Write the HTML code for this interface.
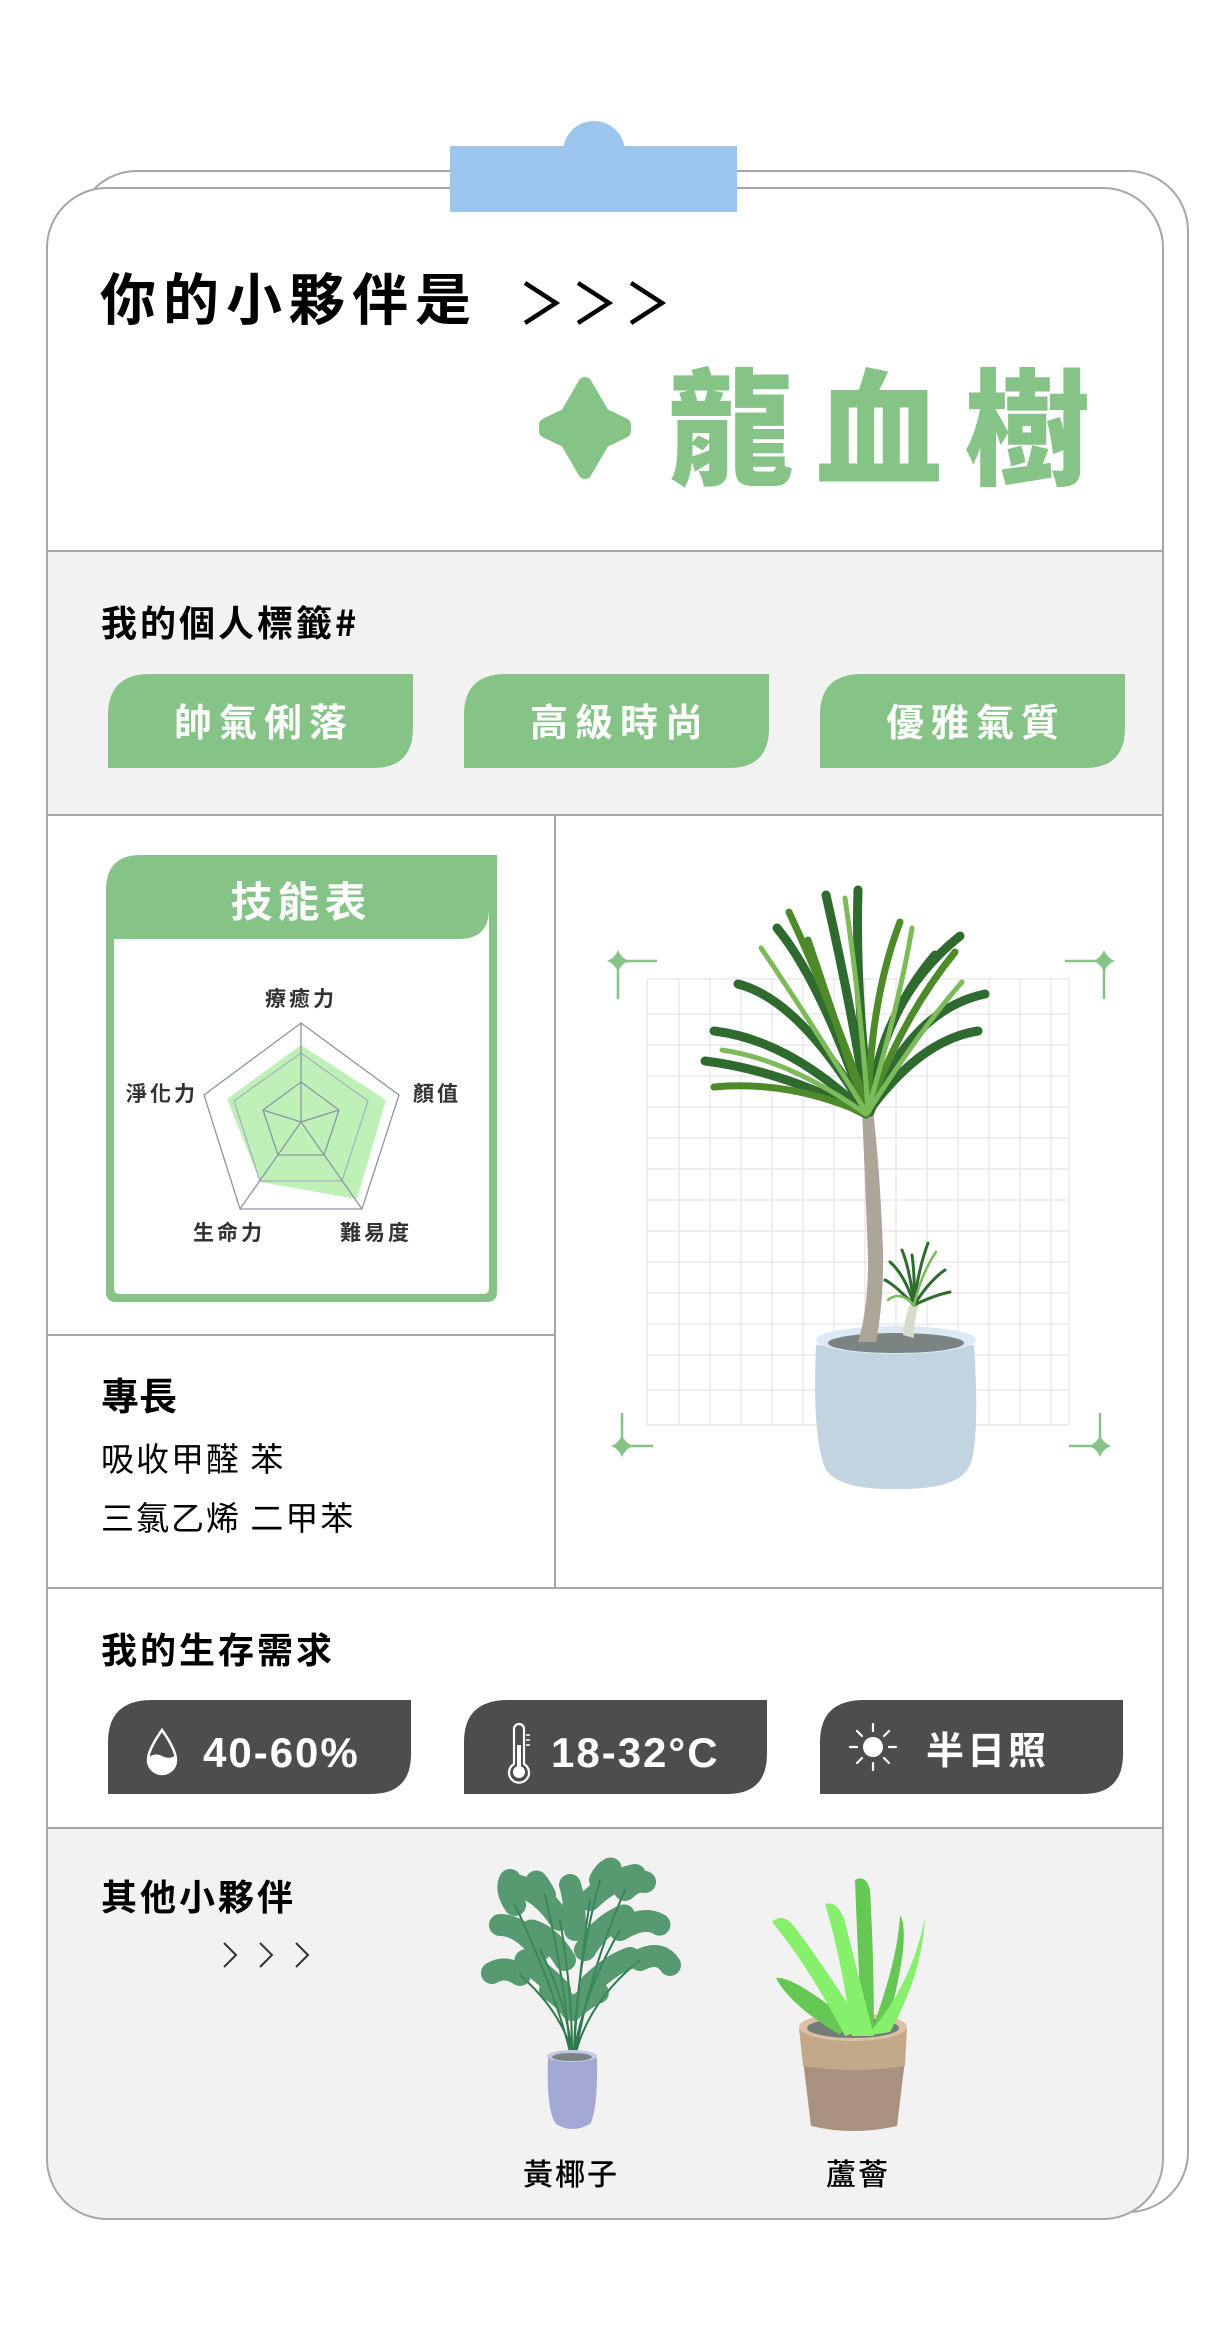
<!DOCTYPE html>
<html><head><meta charset="utf-8"><style>
html,body{margin:0;padding:0;background:#fff;}
svg{display:block;}
text{font-family:"Liberation Sans","Noto Sans CJK TC",sans-serif;}
.cjk{font-family:"Noto Sans CJK TC","Liberation Sans",sans-serif;}
</style></head><body>
<svg width="1227" height="2330" viewBox="0 0 1227 2330" xmlns="http://www.w3.org/2000/svg">
<defs>
<clipPath id="card"><rect x="47" y="188" width="1116" height="2031" rx="60"/></clipPath>
</defs>
<rect x="77" y="171" width="1111" height="2041" rx="60" fill="#fff" stroke="#a6a6a6" stroke-width="2"/>
<rect x="47" y="188" width="1116" height="2031" rx="60" fill="#fff"/>
<g clip-path="url(#card)">
<rect x="40" y="551" width="1130" height="264" fill="#f2f2f2"/>
<rect x="40" y="1828" width="1130" height="400" fill="#f2f2f2"/>
</g>
<rect x="47" y="188" width="1116" height="2031" rx="60" fill="none" stroke="#a6a6a6" stroke-width="2"/>
<g stroke="#a6a6a6" stroke-width="2">
<line x1="47" y1="551" x2="1163" y2="551"/>
<line x1="47" y1="815" x2="1163" y2="815"/>
<line x1="47" y1="1335" x2="555" y2="1335"/>
<line x1="555" y1="815" x2="555" y2="1588"/>
<line x1="47" y1="1588" x2="1163" y2="1588"/>
<line x1="47" y1="1828" x2="1163" y2="1828"/>
</g>
<circle cx="594" cy="152" r="31" fill="#9bc5ec"/>
<rect x="450" y="146" width="287" height="66" fill="#9bc5ec"/>

<text x="100" y="320" class="cjk" font-size="56" font-weight="700" letter-spacing="7" fill="#000">你的小夥伴是</text>
<g fill="none" stroke="#000" stroke-width="4.5" stroke-linejoin="miter">
<path d="M525 283 L556 303 L525 323"/><path d="M578 283 L609 303 L578 323"/><path d="M631 283 L662 303 L631 323"/>
</g>
<polygon points="585,384 603,415 624,425 624,431 603,441 585,472 567,441 546,431 546,425 567,415" fill="#86c386" stroke="#86c386" stroke-width="14" stroke-linejoin="round"/>
<text x="668" y="475" class="cjk" font-size="126" font-weight="900" letter-spacing="22" fill="#86c386">龍血樹</text>

<text x="101" y="636" class="cjk" font-size="36" font-weight="700" letter-spacing="3" fill="#000">我的個人標籤#</text>
<g fill="#86c386">
<path d="M108 768 L108 715 Q108 674 150 674 L413 674 L413 728 Q413 768 373 768Z"/>
<path d="M464 768 L464 715 Q464 674 506 674 L769 674 L769 728 Q769 768 729 768Z"/>
<path d="M820 768 L820 715 Q820 674 862 674 L1125 674 L1125 728 Q1125 768 1085 768Z"/>
</g>
<g class="cjk" font-size="38" font-weight="700" fill="#fff" letter-spacing="7" text-anchor="middle">
<text x="264" y="736">帥氣俐落</text>
<text x="620" y="736">高級時尚</text>
<text x="976" y="736">優雅氣質</text>
</g>

<path d="M106 1292 L106 890 Q106 855 141 855 L497 855 L497 1292 Q497 1302 487 1302 L116 1302 Q106 1302 106 1292Z" fill="#86c386"/>
<path d="M114 939 L459 939 Q489 939 489 909 L489 1288 Q489 1294 483 1294 L120 1294 Q114 1294 114 1288Z" fill="#fff"/>
<text x="301" y="917" class="cjk" font-size="42" font-weight="700" fill="#fff" letter-spacing="5" text-anchor="middle">技能表</text>
<polygon points="301,1045 386,1100 357,1199 260,1182 227,1099" fill="#bff0b8"/>
<g fill="none" stroke="#8a97a3" stroke-width="1.3">
<polygon points="301,1023 399,1095 362,1209 240,1209 204,1095"/>
<polygon points="301,1053 368,1101 342,1181 260,1181 234,1101" stroke="#a8b2bb"/>
<polygon points="301,1082 339,1110 324,1155 278,1155 263,1110"/>
<line x1="301" y1="1122" x2="301" y2="1023"/>
<line x1="301" y1="1122" x2="362" y2="1209"/>
<line x1="301" y1="1122" x2="240" y2="1209"/>
<line x1="301" y1="1122" x2="339" y2="1110"/>
<line x1="301" y1="1122" x2="263" y2="1110"/>
</g>
<g class="cjk" font-size="21" font-weight="700" fill="#333" letter-spacing="3">
<text x="265" y="1006">療癒力</text>
<text x="126" y="1101">淨化力</text>
<text x="413" y="1101">顏值</text>
<text x="193" y="1240">生命力</text>
<text x="340" y="1240">難易度</text>
</g>

<text x="101" y="1410" class="cjk" font-size="38" font-weight="700" fill="#000">專長</text>
<text x="101" y="1471" class="cjk" font-size="33" fill="#000" letter-spacing="2">吸收甲醛 苯</text>
<text x="101" y="1530" class="cjk" font-size="33" fill="#000" letter-spacing="2">三氯乙烯 二甲苯</text>

<g stroke="#e4e4e4" stroke-width="1.2">
<rect x="647" y="979" width="422" height="446" fill="none"/>
<line x1="679" y1="979" x2="679" y2="1425"/><line x1="710" y1="979" x2="710" y2="1425"/><line x1="741" y1="979" x2="741" y2="1425"/><line x1="772" y1="979" x2="772" y2="1425"/><line x1="803" y1="979" x2="803" y2="1425"/><line x1="834" y1="979" x2="834" y2="1425"/><line x1="865" y1="979" x2="865" y2="1425"/><line x1="896" y1="979" x2="896" y2="1425"/><line x1="927" y1="979" x2="927" y2="1425"/><line x1="958" y1="979" x2="958" y2="1425"/><line x1="989" y1="979" x2="989" y2="1425"/><line x1="1020" y1="979" x2="1020" y2="1425"/><line x1="1051" y1="979" x2="1051" y2="1425"/>
<line x1="647" y1="1014" x2="1069" y2="1014"/><line x1="647" y1="1045" x2="1069" y2="1045"/><line x1="647" y1="1076" x2="1069" y2="1076"/><line x1="647" y1="1107" x2="1069" y2="1107"/><line x1="647" y1="1138" x2="1069" y2="1138"/><line x1="647" y1="1169" x2="1069" y2="1169"/><line x1="647" y1="1200" x2="1069" y2="1200"/><line x1="647" y1="1231" x2="1069" y2="1231"/><line x1="647" y1="1262" x2="1069" y2="1262"/><line x1="647" y1="1293" x2="1069" y2="1293"/><line x1="647" y1="1324" x2="1069" y2="1324"/><line x1="647" y1="1355" x2="1069" y2="1355"/><line x1="647" y1="1390" x2="1069" y2="1390"/>
</g>
<g stroke="#86c386" stroke-width="2.5" fill="none">
<path d="M618 961 H657 M618 961 V999"/>
<path d="M1104 961 H1065 M1104 961 V999"/>
<path d="M622 1446 H653 M622 1446 V1413"/>
<path d="M1100 1446 H1069 M1100 1446 V1413"/>
</g>
<g fill="#86c386">
<path d="M618 950 Q621 958 629 961 Q621 964 618 972 Q615 964 607 961 Q615 958 618 950Z"/>
<path d="M1104 950 Q1107 958 1115 961 Q1107 964 1104 972 Q1101 964 1093 961 Q1101 958 1104 950Z"/>
<path d="M622 1435 Q625 1443 633 1446 Q625 1449 622 1457 Q619 1449 611 1446 Q619 1443 622 1435Z"/>
<path d="M1100 1435 Q1103 1443 1111 1446 Q1103 1449 1100 1457 Q1097 1449 1089 1446 Q1097 1443 1100 1435Z"/>
</g>
<path d="M816 1345 Q812 1440 826 1470 Q840 1490 896 1489 Q960 1490 970 1465 Q980 1440 974 1345Z" fill="#c2d4e0"/>
<ellipse cx="896" cy="1340" rx="80" ry="14" fill="#dce8f3"/>
<ellipse cx="896" cy="1343" rx="68" ry="10" fill="#7c8383"/>
<path d="M903 1335 Q906 1310 912 1300 L920 1302 Q913 1320 914 1338Z" fill="#d4dccb"/>
<path d="M876 1342 Q884 1300 883 1250 Q880 1170 873 1110 L862 1110 Q866 1200 868 1260 Q868 1310 858 1342Z" fill="#aea59a"/>
<g fill="none" stroke-linecap="round">
<g stroke="#2f6b2f" stroke-width="9">
<path d="M868 1112 Q850 1000 826 895"/>
<path d="M870 1112 Q855 990 858 890"/>
<path d="M870 1110 Q880 1000 960 936"/>
<path d="M870 1112 Q910 1010 985 994"/>
<path d="M868 1112 Q920 1040 978 1031"/>
<path d="M866 1112 Q800 1000 738 984"/>
<path d="M866 1114 Q790 1040 714 1031"/>
<path d="M866 1114 Q780 1070 705 1061"/>
<path d="M866 1112 Q820 980 777 928"/>
<path d="M868 1112 Q880 1020 935 955"/>
</g>
<g stroke="#4e8a2a" stroke-width="7">
<path d="M868 1112 Q870 1000 900 922"/>
<path d="M868 1110 Q830 1000 789 912"/>
<path d="M866 1114 Q790 1080 714 1087"/>
<path d="M868 1112 Q900 1020 955 952"/>
<path d="M866 1112 Q835 1020 808 940"/>
</g>
<g stroke="#7cba5a" stroke-width="5">
<path d="M868 1110 Q860 1000 845 898"/>
<path d="M868 1110 Q900 1000 912 928"/>
<path d="M866 1112 Q810 1020 761 948"/>
<path d="M868 1112 Q920 1030 962 982"/>
<path d="M866 1114 Q790 1060 722 1050"/>
</g>
<g stroke="#2f6b2f" stroke-width="3">
<path d="M914 1305 Q910 1270 902 1250"/><path d="M914 1305 Q918 1270 928 1243"/><path d="M914 1305 Q930 1280 945 1270"/><path d="M914 1305 Q895 1285 885 1280"/><path d="M914 1305 Q935 1295 950 1292"/><path d="M914 1305 Q905 1275 890 1262"/><path d="M914 1305 Q915 1275 912 1255"/>
</g>
<g stroke="#7cba5a" stroke-width="2.5"><path d="M914 1305 Q922 1272 936 1252"/><path d="M914 1305 Q900 1290 888 1300"/></g>
</g>

<text x="101" y="1663" class="cjk" font-size="36" font-weight="700" letter-spacing="3" fill="#000">我的生存需求</text>
<g fill="#4d4d4d">
<path d="M108 1794 L108 1742 Q108 1700 152 1700 L411 1700 L411 1754 Q411 1794 371 1794Z"/>
<path d="M464 1794 L464 1742 Q464 1700 508 1700 L767 1700 L767 1754 Q767 1794 727 1794Z"/>
<path d="M820 1794 L820 1742 Q820 1700 864 1700 L1123 1700 L1123 1754 Q1123 1794 1083 1794Z"/>
</g>
<path d="M162 1730 Q148 1750 148 1760 A14 14 0 0 0 176 1760 Q176 1750 162 1730Z" fill="none" stroke="#fff" stroke-width="2.5"/>
<path d="M148 1758 Q155 1752 162 1756 Q170 1760 176 1755 L176 1760 A14 14 0 0 1 148 1760Z" fill="#fff"/>
<text x="203" y="1767" font-size="42" font-weight="700" fill="#fff" letter-spacing="2">40-60%</text>
<path d="M514 1764 L514 1729 A5 5 0 0 1 524 1729 L524 1764 A10 10 0 1 1 514 1764Z" fill="none" stroke="#fff" stroke-width="2.2"/>
<circle cx="519" cy="1772" r="6" fill="#fff"/><rect x="517" y="1745" width="4" height="25" fill="#fff"/>
<g stroke="#fff" stroke-width="1.5"><line x1="526" y1="1735" x2="530" y2="1735"/><line x1="526" y1="1740" x2="530" y2="1740"/><line x1="526" y1="1745" x2="530" y2="1745"/></g>
<text x="551" y="1767" font-size="42" font-weight="700" fill="#fff" letter-spacing="2">18-32°C</text>
<circle cx="873" cy="1747" r="10" fill="#fff"/>
<g stroke="#fff" stroke-width="2.2" stroke-linecap="round">
<line x1="873" y1="1724" x2="873" y2="1731"/><line x1="873" y1="1763" x2="873" y2="1770"/>
<line x1="850" y1="1747" x2="857" y2="1747"/><line x1="889" y1="1747" x2="896" y2="1747"/>
<line x1="857" y1="1731" x2="862" y2="1736"/><line x1="884" y1="1758" x2="889" y2="1763"/>
<line x1="889" y1="1731" x2="884" y2="1736"/><line x1="862" y1="1758" x2="857" y2="1763"/>
</g>
<text x="926" y="1764" class="cjk" font-size="38" font-weight="700" fill="#fff" letter-spacing="3">半日照</text>

<text x="101" y="1910" class="cjk" font-size="36" font-weight="700" letter-spacing="3" fill="#000">其他小夥伴</text>
<g fill="none" stroke="#333" stroke-width="2"><path d="M224 1943 L236 1955 L224 1967"/><path d="M260 1943 L272 1955 L260 1967"/><path d="M296 1943 L308 1955 L296 1967"/></g>
<g fill="none" stroke="#2e7a4e" stroke-linecap="round">
<g stroke-width="2">
<path d="M572 2052 Q566 2000 540 1950"/><path d="M572 2052 Q572 1990 560 1920"/><path d="M574 2052 Q578 1980 590 1900"/><path d="M574 2052 Q585 1990 620 1930"/><path d="M572 2052 Q560 2010 520 1975"/><path d="M576 2052 Q590 2000 640 1960"/><path d="M574 2052 Q576 1970 600 1880"/><path d="M570 2052 Q555 1990 515 1905"/><path d="M570 2052 Q565 1980 545 1895"/><path d="M576 2052 Q590 1970 625 1890"/>
</g>
<g stroke-width="22" stroke="#3d8a5b" stroke-dasharray="1.2 2.5" opacity="0.85">
<path d="M540 1950 Q520 1925 500 1925"/><path d="M560 1920 Q540 1890 515 1885"/><path d="M590 1900 Q610 1880 635 1875"/><path d="M620 1930 Q645 1915 660 1925"/><path d="M520 1975 Q505 1965 492 1973"/><path d="M640 1960 Q660 1950 670 1965"/><path d="M600 1880 Q605 1870 612 1868"/><path d="M515 1905 Q505 1890 510 1880"/>
<path d="M565 1960 Q550 1935 530 1930"/><path d="M585 1950 Q600 1925 625 1915"/><path d="M575 1930 Q575 1900 570 1885"/><path d="M560 1990 Q545 1975 525 1960"/><path d="M590 1985 Q610 1965 630 1958"/><path d="M545 1895 Q540 1885 535 1880"/><path d="M625 1890 Q635 1880 645 1882"/><path d="M572 2010 Q560 1995 550 1990"/><path d="M578 2005 Q590 1995 600 1992"/>
</g>
</g>
<path d="M548 2058 Q546 2110 556 2124 Q572 2134 590 2124 Q598 2110 597 2058Z" fill="#a4a8d4"/>
<ellipse cx="572" cy="2056" rx="25" ry="6" fill="#c5c8e4"/>
<ellipse cx="572" cy="2057" rx="20" ry="4" fill="#7c8383"/>
<text x="523" y="2185" class="cjk" font-size="30" font-weight="500" fill="#000" letter-spacing="2">黃椰子</text>
<path d="M803 2060 L811 2126 Q853 2136 897 2126 L905 2060Z" fill="#a8917f"/>
<path d="M799 2028 L803 2066 Q853 2074 905 2066 L907 2028Z" fill="#c4a88a"/>
<ellipse cx="853" cy="2027" rx="54" ry="14" fill="#dcc0a4"/>
<ellipse cx="853" cy="2028" rx="46" ry="10" fill="#727d7a"/>
<g>
<path d="M862 2032 Q858 1960 855 1880 Q866 1874 870 1890 Q874 1960 874 2030Z" fill="#64c852"/>
<path d="M840 2035 Q790 2005 776 1978 Q792 1975 848 2020Z" fill="#64c852"/>
<path d="M870 2035 Q898 1960 900 1915 Q912 1935 886 2030Z" fill="#64c852"/>
<path d="M845 2036 Q808 1965 772 1922 Q782 1912 794 1926 Q834 1980 864 2030Z" fill="#86f06c"/>
<path d="M852 2036 Q842 1960 825 1904 Q838 1900 845 1922 Q862 1990 874 2036Z" fill="#86f06c"/>
<path d="M866 2036 Q910 1990 925 1918 Q922 1975 890 2032Z" fill="#86f06c"/>
</g>
<text x="826" y="2185" class="cjk" font-size="30" font-weight="500" fill="#000" letter-spacing="2">蘆薈</text>
</svg>
</body></html>
